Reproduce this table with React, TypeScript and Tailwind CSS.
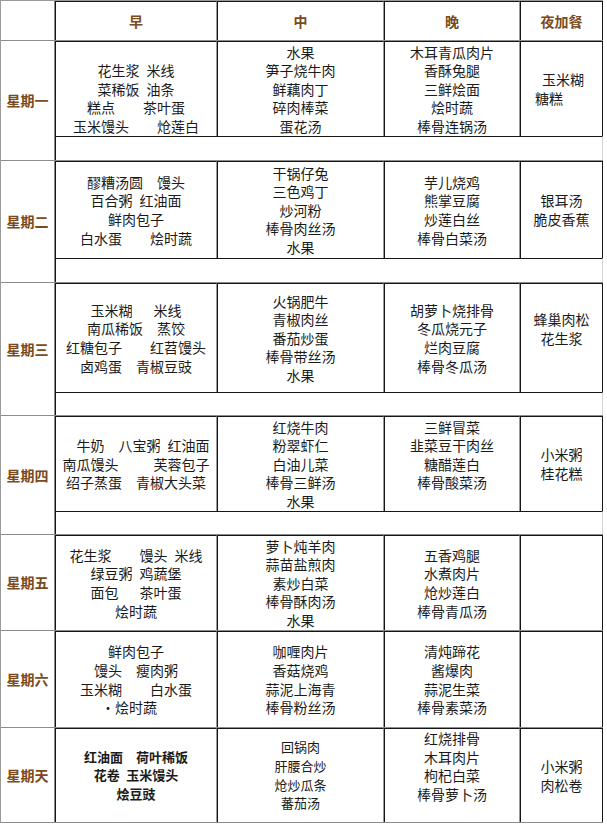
type Meal = {
  lines: string[];
  cls?: string;
  left?: boolean;
};

type Day = {
  name: string;
  h: string;
  ch?: string;
  meals: Meal[];
};

const widths = ["w-[162px]", "w-[167px]", "w-[136px]", "w-[83px]"];

const m = (lines: string[], cls?: string, left?: boolean): Meal => ({ lines, cls, left });

const days: Day[] = [
  {
    name: "星期一",
    h: "h-[120px]",
    ch: "h-[95px]",
    meals: [
      m(["", "花生浆 米线", "菜稀饭 油条", "糕点    茶叶蛋", "玉米馒头    炝莲白"]),
      m(["水果", "笋子烧牛肉", "鲜藕肉丁", "碎肉棒菜", "蛋花汤"]),
      m(["木耳青瓜肉片", "香酥兔腿", "三鲜烩面", "烩时蔬", "棒骨连锅汤"]),
      m([" 玉米糊", "糖糕"], undefined, true),
    ],
  },
  {
    name: "星期二",
    h: "h-[122px]",
    ch: "h-[97px]",
    meals: [
      m(["醪糟汤圆  馒头", "百合粥 红油面", "鲜肉包子", "白水蛋    烩时蔬"]),
      m(["干锅仔兔", "三色鸡丁", "炒河粉", "棒骨肉丝汤", "水果"]),
      m(["芋儿烧鸡", "熊掌豆腐", "炒莲白丝", "棒骨白菜汤"]),
      m(["银耳汤", "脆皮香蕉"]),
    ],
  },
  {
    name: "星期三",
    h: "h-[133px]",
    ch: "h-[109px]",
    meals: [
      m(["玉米糊   米线", "南瓜稀饭  蒸饺", "红糖包子    红苕馒头", "卤鸡蛋  青椒豆豉"]),
      m(["火锅肥牛", "青椒肉丝", "番茄炒蛋", "棒骨带丝汤", "水果"]),
      m(["胡萝卜烧排骨", "冬瓜烧元子", "烂肉豆腐", "棒骨冬瓜汤"]),
      m(["蜂巢肉松", "花生浆", ""]),
    ],
  },
  {
    name: "星期四",
    h: "h-[119px]",
    ch: "h-[95px]",
    meals: [
      m(["  牛奶  八宝粥 红油面", "南瓜馒头     芙蓉包子", "绍子蒸蛋  青椒大头菜"]),
      m(["红烧牛肉", "粉翠虾仁", "白油儿菜", "棒骨三鲜汤", "水果"]),
      m(["三鲜冒菜", "韭菜豆干肉丝", "糖醋莲白", "棒骨酸菜汤", ""]),
      m(["小米粥", "桂花糕"]),
    ],
  },
  {
    name: "星期五",
    h: "h-[96px]",
    meals: [
      m(["花生浆    馒头 米线", "绿豆粥 鸡蔬堡", "面包   茶叶蛋", "烩时蔬"]),
      m(["萝卜炖羊肉", "蒜苗盐煎肉", "素炒白菜", "棒骨酥肉汤", "水果"]),
      m(["五香鸡腿", "水煮肉片", "炝炒莲白", "棒骨青瓜汤"]),
      m([]),
    ],
  },
  {
    name: "星期六",
    h: "h-[97px]",
    meals: [
      m(["鲜肉包子", "馒头  瘦肉粥", "玉米糊    白水蛋", "·烩时蔬  "]),
      m(["咖喱肉片", "香菇烧鸡", "蒜泥上海青", "棒骨粉丝汤"]),
      m(["清炖蹄花", "酱爆肉", "蒜泥生菜", "棒骨素菜汤"]),
      m([]),
    ],
  },
  {
    name: "星期天",
    h: "h-[95px]",
    meals: [
      m(["红油面  荷叶稀饭", "花卷 玉米馒头", "烩豆豉"], "font-bold text-[13px]"),
      m(["回锅肉", "肝腰合炒", "炝炒瓜条", "蕃茄汤"], "text-[13px]"),
      m(["红烧排骨", "木耳肉片", "枸杞白菜", "棒骨萝卜汤", ""]),
      m(["小米粥", "肉松卷"]),
    ],
  },
];

const MealCell = ({ meal, idx }: { meal: Meal; idx: number }) => (
  <div
    className={`flex h-full flex-col justify-center border-t border-l border-t-[#151515] border-l-[#151515] ${
      idx === 3 ? "border-r border-r-[#151515]" : "border-r border-r-[#9a9a9a]"
    } ${meal.left ? "items-start pl-[14px]" : "items-center"} ${widths[idx]} ${meal.cls ?? "text-[14px]"}`}
  >
    {meal.lines.map((line, i) => (
      <div key={i} className="h-[18.6px] whitespace-pre leading-[18.6px]">
        {line.replace(/ /g, "\u2002") || "\u00a0"}
      </div>
    ))}
  </div>
);

const App = () => {
  return (
    <div className="min-h-screen bg-white font-['Noto_Sans_CJK_SC','DejaVu_Sans',sans-serif] text-[#1b1b1b]">
      <div className="w-[603px] border-t border-l border-[#9a9a9a]">
        {/* header */}
        <div className="flex h-[40px] border-b border-[#8c8c8c]">
          <div className="w-[54px] border-r border-[#8c8c8c]" />
          {["早", "中", "晚", "夜加餐"].map((t, i) => (
            <div
              key={t}
              className={`flex items-center justify-center border-t border-l border-t-[#151515] border-l-[#151515] text-[14px] font-bold text-[#7a4a20] ${
                i === 3 ? "border-r border-r-[#151515]" : "border-r border-r-[#9a9a9a]"
              } ${widths[i]}`}
            >
              {t}
            </div>
          ))}
        </div>

        {days.map((d) => (
          <div key={d.name} className={`flex border-b border-[#8c8c8c] ${d.h}`}>
            <div className="flex w-[54px] items-center justify-center border-r border-[#8c8c8c] text-[14px] font-bold text-[#7a4a20]">
              {d.name}
            </div>
            <div className="flex flex-col">
              <div className={`flex ${d.ch ?? "h-full"}`}>
                {d.meals.map((meal, i) => (
                  <MealCell key={i} meal={meal} idx={i} />
                ))}
              </div>
              {d.ch && (
                <div className="flex-1 border-t border-l border-r border-t-[#151515] border-l-[#151515] border-r-[#d4d4d4]" />
              )}
            </div>
          </div>
        ))}
      </div>
    </div>
  );
};

export default App;
